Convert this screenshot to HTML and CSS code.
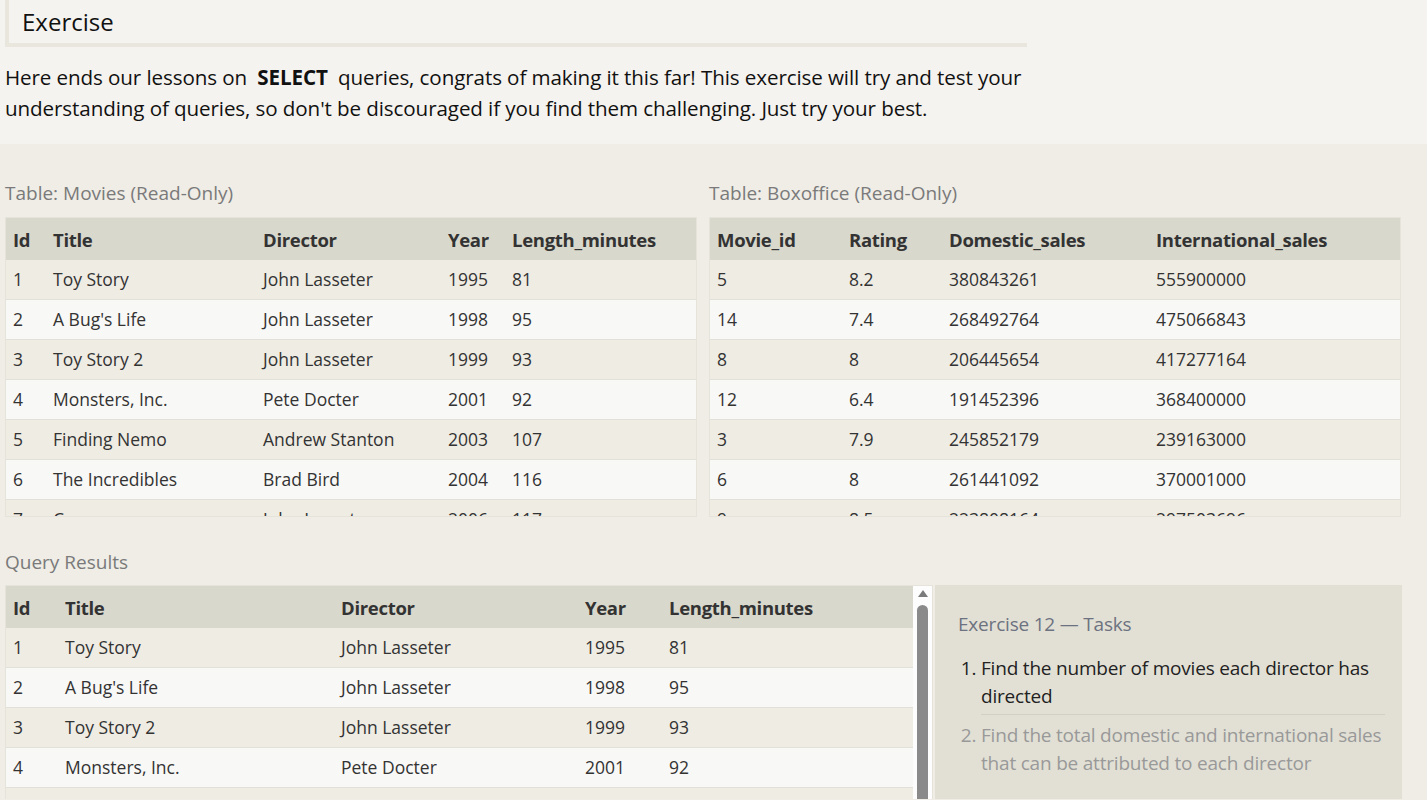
FILE: index.html
```html
<!DOCTYPE html>
<html>
<head>
<meta charset="utf-8">
<link rel="stylesheet" href="styles.css">
</head>
<body>
<section class="intro">
  <h1 class="title">Exercise</h1>
  <p class="lead">Here ends our lessons on <strong class="kw">SELECT</strong> queries, congrats of making it this far! This exercise will try and test your understanding of queries, so don't be discouraged if you find them challenging. Just try your best.</p>
</section>
<section class="work">
  <div class="tables">
    <div class="tablebox">
      <div class="caption">Table: Movies (Read-Only)</div>
      <div class="scroller short">
        <table class="grid">
          <colgroup><col style="width:40px"><col style="width:210px"><col style="width:185px"><col style="width:64px"><col></colgroup>
          <thead><tr><th>Id</th><th>Title</th><th>Director</th><th>Year</th><th>Length_minutes</th></tr></thead>
          <tbody>
            <tr><td>1</td><td>Toy Story</td><td>John Lasseter</td><td>1995</td><td>81</td></tr>
            <tr><td>2</td><td>A Bug's Life</td><td>John Lasseter</td><td>1998</td><td>95</td></tr>
            <tr><td>3</td><td>Toy Story 2</td><td>John Lasseter</td><td>1999</td><td>93</td></tr>
            <tr><td>4</td><td>Monsters, Inc.</td><td>Pete Docter</td><td>2001</td><td>92</td></tr>
            <tr><td>5</td><td>Finding Nemo</td><td>Andrew Stanton</td><td>2003</td><td>107</td></tr>
            <tr><td>6</td><td>The Incredibles</td><td>Brad Bird</td><td>2004</td><td>116</td></tr>
            <tr><td>7</td><td>Cars</td><td>John Lasseter</td><td>2006</td><td>117</td></tr>
          </tbody>
        </table>
      </div>
    </div>
    <div class="tablebox">
      <div class="caption">Table: Boxoffice (Read-Only)</div>
      <div class="scroller short">
        <table class="grid">
          <colgroup><col style="width:132px"><col style="width:100px"><col style="width:207px"><col></colgroup>
          <thead><tr><th>Movie_id</th><th>Rating</th><th>Domestic_sales</th><th>International_sales</th></tr></thead>
          <tbody>
            <tr><td>5</td><td>8.2</td><td>380843261</td><td>555900000</td></tr>
            <tr><td>14</td><td>7.4</td><td>268492764</td><td>475066843</td></tr>
            <tr><td>8</td><td>8</td><td>206445654</td><td>417277164</td></tr>
            <tr><td>12</td><td>6.4</td><td>191452396</td><td>368400000</td></tr>
            <tr><td>3</td><td>7.9</td><td>245852179</td><td>239163000</td></tr>
            <tr><td>6</td><td>8</td><td>261441092</td><td>370001000</td></tr>
            <tr><td>9</td><td>8.5</td><td>223808164</td><td>297503696</td></tr>
          </tbody>
        </table>
      </div>
    </div>
  </div>
  <div class="caption results-cap">Query Results</div>
  <div class="bottom">
    <div class="results">
      <div class="results-inner">
        <table class="grid">
          <colgroup><col style="width:52px"><col style="width:276px"><col style="width:244px"><col style="width:84px"><col></colgroup>
          <thead><tr><th>Id</th><th>Title</th><th>Director</th><th>Year</th><th>Length_minutes</th></tr></thead>
          <tbody>
            <tr><td>1</td><td>Toy Story</td><td>John Lasseter</td><td>1995</td><td>81</td></tr>
            <tr><td>2</td><td>A Bug's Life</td><td>John Lasseter</td><td>1998</td><td>95</td></tr>
            <tr><td>3</td><td>Toy Story 2</td><td>John Lasseter</td><td>1999</td><td>93</td></tr>
            <tr><td>4</td><td>Monsters, Inc.</td><td>Pete Docter</td><td>2001</td><td>92</td></tr>
            <tr><td>5</td><td>Finding Nemo</td><td>Andrew Stanton</td><td>2003</td><td>107</td></tr>
          </tbody>
        </table>
      </div>
      <div class="scrollbar">
        <div class="arrow"></div>
        <div class="thumb"></div>
      </div>
    </div>
    <aside class="tasks">
      <h2 class="tasks-title">Exercise 12 — Tasks</h2>
      <ol class="task-list">
        <li class="task active">Find the number of movies each director has directed</li>
        <li class="task pending">Find the total domestic and international sales that can be attributed to each director</li>
      </ol>
    </aside>
  </div>
</section>
</body>
</html>
```

FILE: styles.css
```css
html, body {
  margin: 0;
  padding: 0;
  height: 800px;
  overflow: hidden;
  background: #efede6;
  font-family: "Open Sans", "Noto Sans", sans-serif;
  color: #111;
}

.intro {
  background: #f5f3ef;
  padding: 0 0 1px 5px;
  height: 144px;
  box-sizing: border-box;
}

.title {
  margin: 0;
  width: 1022px;
  height: 47px;
  box-sizing: border-box;
  border-left: 4px solid #e8e6dd;
  border-bottom: 4px solid #e8e6dd;
  padding: 5px 0 0 13px;
  font-weight: 400;
  font-size: 24px;
  line-height: 34px;
  color: #111;
}

.lead {
  margin: 15px 0 0 0;
  width: 1040px;
  font-size: 20.6px;
  line-height: 31px;
  letter-spacing: -0.1px;
}

.kw {
  font-weight: 700;
  padding: 0 5px;
}

.work {
  padding: 36px 0 0 5px;
}

.tables {
  display: flex;
  gap: 12px;
}

.tablebox {
  width: 692px;
}

.caption {
  font-size: 19px;
  line-height: 26px;
  color: #7a7a7a;
  letter-spacing: 0;
  margin-bottom: 11px;
}

.scroller {
  border: 1px solid #e5e3da;
  overflow: hidden;
}

.scroller.short {
  height: 298px;
}

.grid {
  border-collapse: collapse;
  table-layout: fixed;
  width: 100%;
}

.grid th {
  background: #d9d8cc;
  text-align: left;
  font-weight: 700;
  font-size: 18.5px;
  color: #333;
  height: 42px;
  padding: 1px 7px 0;
  box-sizing: border-box;
  letter-spacing: -0.3px;
  white-space: nowrap;
}

.grid td {
  font-size: 17.5px;
  color: #333;
  height: 38px;
  padding: 0 7px 1px;
  border-bottom: 1px solid #e1e0d9;
  white-space: nowrap;
  letter-spacing: 0;
}

.grid tbody tr:nth-child(odd) td {
  background: #efece4;
}

.grid tbody tr:nth-child(even) td {
  background: #f8f8f6;
}

.results-cap {
  margin-top: 32px;
  margin-bottom: 10px;
}

.bottom {
  display: flex;
  gap: 2px;
}

.results {
  width: 928px;
  height: 214px;
  display: flex;
  border: 1px solid #e5e3da;
  border-bottom: 0;
  box-sizing: border-box;
}

.results-inner {
  width: 907px;
  overflow: hidden;
}

.scrollbar {
  width: 19px;
  background: #fdfdfd;
  display: flex;
  flex-direction: column;
  align-items: center;
}

.arrow {
  width: 0;
  height: 0;
  margin-top: 4px;
  border-left: 5px solid transparent;
  border-right: 5px solid transparent;
  border-bottom: 7px solid #7b7b7b;
}

.thumb {
  margin-top: 8px;
  width: 11px;
  flex: 1;
  background: #8a8a8a;
  border-radius: 6px 6px 0 0;
}

.tasks {
  width: 467px;
  height: 214px;
  background: #e2e0d5;
  padding: 25px 17px 0 23px;
  box-sizing: border-box;
}

.tasks-title {
  margin: 0 0 14px 0;
  font-weight: 400;
  font-size: 19px;
  line-height: 28px;
  color: #6d7280;
  letter-spacing: -0.2px;
}

.task-list {
  margin: 0;
  padding: 0 0 0 23px;
}

.task {
  font-size: 19px;
  line-height: 28px;
  letter-spacing: -0.2px;
  padding: 2px 0 4px 0;
}

.task.active {
  color: #222;
  border-bottom: 1px solid #d2d0c5;
}

.task.pending {
  color: #999;
  padding-top: 6px;
}
```
